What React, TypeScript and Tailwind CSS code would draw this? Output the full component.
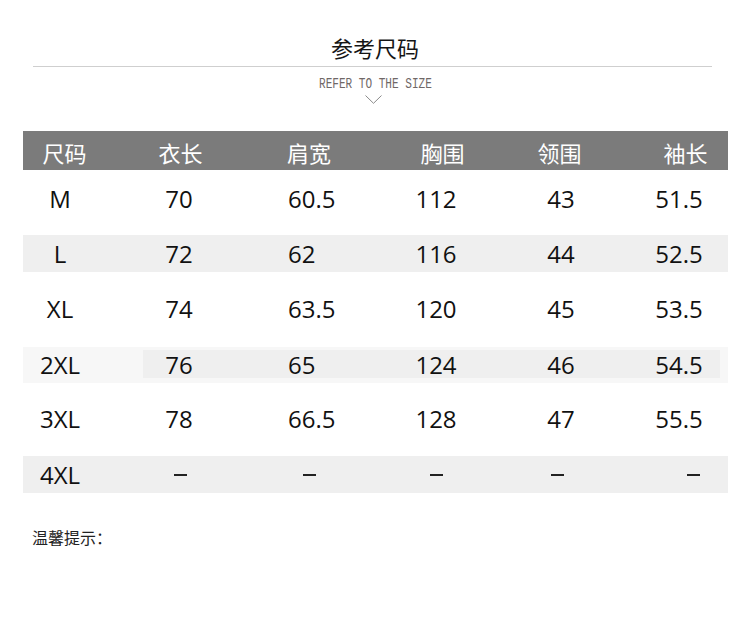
import React from "react";

const CJK = "font-['Noto_Sans_CJK_SC','Noto_Sans',sans-serif]";
const NUM = "font-['Open_Sans','Noto_Sans',sans-serif]";

const gridCols = "grid grid-cols-[93px_126px_138px_112px_138px_98px]";

type Row = {
  size: string;
  vals: string[];
  pt: string;
  h: string;
  bg: string;
  inner?: boolean;
};

const rows: Row[] = [
  { size: "M", vals: ["70", "60.5", "112", "43", "51.5"], pt: "pt-[9px]", h: "h-[37px]", bg: "" },
  { size: "L", vals: ["72", "62", "116", "44", "52.5"], pt: "pt-[9px]", h: "h-[37px]", bg: "bg-[#efefef]" },
  { size: "XL", vals: ["74", "63.5", "120", "45", "53.5"], pt: "pt-[9px]", h: "h-[37px]", bg: "" },
  { size: "2XL", vals: ["76", "65", "124", "46", "54.5"], pt: "pt-[11px]", h: "h-[36px]", bg: "bg-[#f7f7f7]", inner: true },
  { size: "3XL", vals: ["78", "66.5", "128", "47", "55.5"], pt: "pt-[9px]", h: "h-[37px]", bg: "" },
];

function DataRow({ r }: { r: Row }) {
  return (
    <div className={`h-[55px] ${r.pt}`}>
      <div className={`${r.h} ${r.bg} relative`}>
        {r.inner && (
          <div className="absolute left-[120px] top-[3px] h-[28px] w-[577px] bg-[#efefef]" />
        )}
        <div className={`${gridCols} relative h-full items-center text-[24px] leading-none text-[#111] ${NUM}`}>
          <div className="pr-[19px] text-center">{r.size}</div>
          <div className="text-center">{r.vals[0]}</div>
          <div className="pl-[46px] text-left">{r.vals[1]}</div>
          <div className="text-center">{r.vals[2]}</div>
          <div className="text-center">{r.vals[3]}</div>
          <div className="text-center">{r.vals[4]}</div>
        </div>
      </div>
    </div>
  );
}

function Dash({ cls }: { cls: string }) {
  return (
    <div className={`flex justify-center ${cls}`}>
      <div className="w-[13px] h-[2px] bg-[#222]" />
    </div>
  );
}

export default function App() {
  return (
    <div className="w-[750px] h-[619px] bg-white overflow-hidden">
      {/* Title */}
      <div className="pt-[32px] h-[62px] flex justify-center">
        <div className={`h-[30px] flex items-center text-[22px] font-normal text-[#151515] ${CJK}`}>
          参考尺码
        </div>
      </div>
      <div className="mt-[4px] ml-[33px] w-[679px] h-px bg-[#cfcfcf]" />
      <div className="mt-[10px] flex justify-center">
        <div className="h-[14px] leading-[14px] text-[14px] text-[#6f6867] font-['Liberation_Mono',monospace] scale-x-[0.79] whitespace-nowrap">
          REFER TO THE SIZE
        </div>
      </div>
      <div className="mt-[4px] flex justify-center">
        <svg width="17" height="9" viewBox="0 0 17 9" className="-translate-x-[2px]">
          <polyline points="0.5,0.5 8.5,8.3 16.5,0.5" fill="none" stroke="#8a8a8a" strokeWidth="1" />
        </svg>
      </div>

      {/* Table */}
      <div className="mt-[27px] ml-[23px] w-[705px]">
        <div className={`${gridCols} h-[39px] pt-[2px] items-center bg-[#7b7b7b] text-white text-[22px] leading-none ${CJK}`}>
          <div className="pr-[10px] text-center">尺码</div>
          <div className="pl-[3px] text-center">衣长</div>
          <div className="pr-[4px] text-center">肩宽</div>
          <div className="pl-[13px] text-center">胸围</div>
          <div className="pr-[3px] text-center">领围</div>
          <div className="pl-[13px] text-center">袖长</div>
        </div>
        <div className="h-px" />
        {rows.map((r) => (
          <DataRow key={r.size} r={r} />
        ))}
        <div className="h-[55px] pt-[10px]">
          <div className="h-[37px] bg-[#efefef]">
            <div className={`${gridCols} h-full items-center text-[24px] leading-none text-[#111] ${NUM}`}>
              <div className="pr-[19px] text-center">4XL</div>
              <Dash cls="pl-[2px]" />
              <Dash cls="pr-[4px]" />
              <Dash cls="" />
              <Dash cls="pr-[8px]" />
              <Dash cls="pl-[28px]" />
            </div>
          </div>
        </div>
      </div>

      {/* Tips */}
      <div className={`mt-[28px] ml-[32px] text-[16px] leading-[16px] text-[#222] ${CJK}`}>
        温馨提示：
      </div>
    </div>
  );
}
